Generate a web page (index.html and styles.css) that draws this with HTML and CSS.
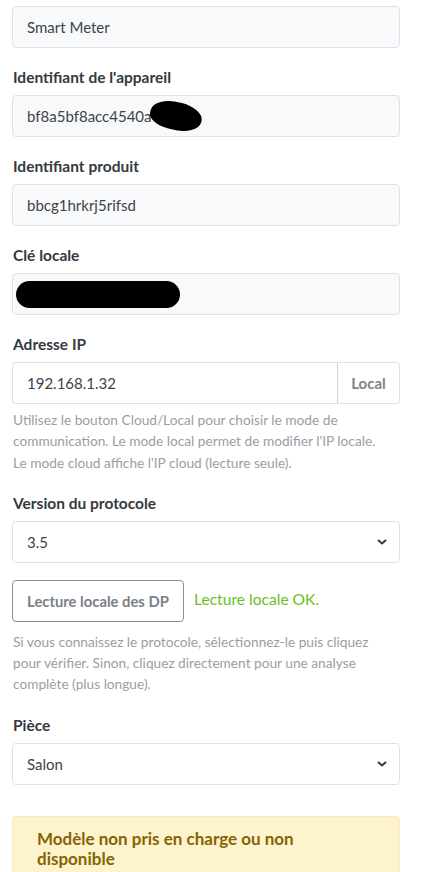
FILE: index.html
```html
<!DOCTYPE html>
<html lang="fr">
<head>
<meta charset="utf-8">
<link rel="stylesheet" href="styles.css">
</head>
<body>
<div class="form">
  <div class="group first">
    <div class="field readonly">Smart Meter</div>
  </div>
  <div class="group">
    <div class="label">Identifiant de l'appareil</div>
    <div class="field readonly masked">bf8a5bf8acc4540a<span class="blob blob-id"></span></div>
  </div>
  <div class="group">
    <div class="label">Identifiant produit</div>
    <div class="field readonly">bbcg1hrkrj5rifsd</div>
  </div>
  <div class="group">
    <div class="label">Clé locale</div>
    <div class="field readonly masked"><span class="blob blob-key"></span></div>
  </div>
  <div class="group with-help">
    <div class="label">Adresse IP</div>
    <div class="input-group">
      <div class="field ip">192.168.1.32</div>
      <div class="append">Local</div>
    </div>
    <p class="help">Utilisez le bouton Cloud/Local pour choisir le mode de communication. Le mode local permet de modifier l'IP locale. Le mode cloud affiche l'IP cloud (lecture seule).</p>
  </div>
  <div class="group with-help">
    <div class="label">Version du protocole</div>
    <div class="field select version">3.5<svg class="chev" viewBox="0 0 10 6" width="10" height="6"><path d="M1 1l4 3.5L9 1" fill="none" stroke="#343a40" stroke-width="2"/></svg></div>
    <div class="action-row">
      <div class="btn">Lecture locale des DP</div>
      <span class="ok">Lecture locale OK.</span>
    </div>
    <p class="help help2">Si vous connaissez le protocole, sélectionnez-le puis cliquez pour vérifier. Sinon, cliquez directement pour une analyse complète (plus longue).</p>
  </div>
  <div class="group">
    <div class="label">Pièce</div>
    <div class="field select">Salon<svg class="chev" viewBox="0 0 10 6" width="10" height="6"><path d="M1 1l4 3.5L9 1" fill="none" stroke="#343a40" stroke-width="2"/></svg></div>
  </div>
  <div class="alert">Modèle non pris en charge ou non disponible</div>
</div>
</body>
</html>
```

FILE: styles.css
```css
html, body {
  margin: 0;
  padding: 0;
  background: #fff;
}
body {
  font-family: Lato, "Open Sans", sans-serif;
  color: #212529;
  overflow: hidden;
}
.form {
  width: 388px;
  margin-left: 12px;
  padding-top: 6px;
}
.group {
  margin-bottom: 19px;
}
.group.with-help {
  margin-bottom: 20px;
}
.label {
  font-size: 15.5px;
  font-weight: 700;
  line-height: 20px;
  color: #343a40;
  margin-bottom: 8px;
  padding-left: 1px;
}
.field {
  box-sizing: border-box;
  height: 42px;
  border: 1px solid #dee2e6;
  border-radius: 4px;
  background: #fff;
  padding: 0 14px;
  display: flex;
  align-items: center;
  font-size: 15px;
  color: #3d4349;
  position: relative;
}
.field.readonly {
  background: #f8f9fa;
}
.blob {
  position: absolute;
  background: #000;
}
.blob-id {
  left: 137px;
  top: 6px;
  width: 52px;
  height: 28px;
  border-radius: 50% 45% 50% 40%;
  transform: rotate(14deg);
}
.blob-key {
  left: 3px;
  top: 7px;
  width: 164px;
  height: 27px;
  border-radius: 14px;
}
.input-group {
  display: flex;
  height: 42px;
}
.input-group .field.ip {
  flex: 1;
  border-radius: 4px 0 0 4px;
  border-right: 0;
}
.append {
  box-sizing: border-box;
  width: 63px;
  border: 1px solid #dee2e6;
  border-left: 1px solid #ced4da;
  border-radius: 0 4px 4px 0;
  display: flex;
  align-items: center;
  justify-content: center;
  font-size: 15px;
  font-weight: 700;
  color: #7d858e;
}
.help {
  margin: 5px 0 0;
  padding: 0 22px 0 1px;
  font-size: 13.7px;
  line-height: 21.3px;
  color: #9a9ea3;
}
.help2 {
  margin-top: 9px;
}
.select {
  justify-content: space-between;
}
.chev {
  margin-right: -2px;
}
.action-row {
  display: flex;
  align-items: center;
  margin-top: 17px;
  gap: 10px;
}
.btn {
  box-sizing: border-box;
  height: 42px;
  width: 172px;
  border: 1px solid #8a8f95;
  border-radius: 4px;
  display: flex;
  align-items: center;
  justify-content: center;
  font-size: 14.8px;
  font-weight: 700;
  color: #7a8088;
}
.ok {
  font-size: 15.6px;
  color: #6cbf1a;
  margin-top: -4px;
}
.alert {
  margin-top: 31px;
  background: #fdf3cd;
  border: 1px solid #fcecb8;
  border-bottom: 0;
  border-radius: 4px 4px 0 0;
  padding: 12px 50px 20px 24px;
  font-size: 17px;
  font-weight: 700;
  line-height: 20px;
  color: #856404;
}
```
